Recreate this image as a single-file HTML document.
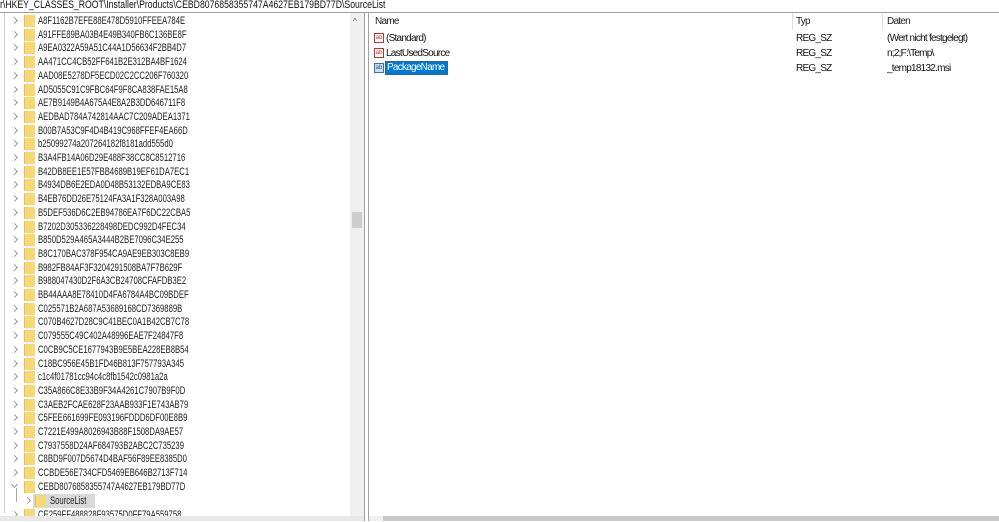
<!DOCTYPE html>
<html><head><meta charset="utf-8"><style>
*{margin:0;padding:0;box-sizing:border-box}
body{width:999px;height:521px;overflow:hidden;background:#fff;font-family:"Liberation Sans",sans-serif;font-size:10px;letter-spacing:-0.75px;color:#111;position:relative}
.abs{position:absolute}
.addr{left:0;top:0;height:12px;line-height:11px;white-space:nowrap;font-size:11px;letter-spacing:0;transform:scaleX(0.79);transform-origin:0 0}
.row{position:absolute;left:0;height:14px;width:350px;white-space:nowrap}
.chev{position:absolute;left:12px;top:4px;width:5px;height:5px;border-right:1px solid #999;border-top:1px solid #999;transform:rotate(45deg)}
.fold{position:absolute;left:24px;top:1px;width:11px;height:12px;background:#f8d775;border-left:1px solid #e8c05a}
.t{position:absolute;left:38px;top:1px;line-height:12px;font-size:11px;letter-spacing:0;transform:scaleX(0.7);transform-origin:0 0;color:#222}
.h{position:absolute;top:16px;line-height:12px;color:#222}
.ic{position:absolute;left:374px;width:10px;height:10px;border:1px solid #b33;background:#fff;font-size:6px;line-height:8px;color:#c33;text-align:center;letter-spacing:0}
.v{position:absolute;line-height:12px}
</style></head><body>
<div class="abs addr">r\HKEY_CLASSES_ROOT\Installer\Products\CEBD8076858355747A4627EB179BD77D\SourceList</div>
<div class="abs" style="left:0;top:12px;width:999px;height:1px;background:#a0a0a0"></div>
<div class="abs" style="left:4px;top:13px;width:1px;height:500px;background:#ccc"></div>
<div id="tree"></div>
<div class="abs" style="left:350px;top:13px;width:14px;height:503px;background:#f0f0f0"></div>
<div class="abs" style="left:352px;top:212px;width:10px;height:16px;background:#cdcdcd"></div>
<div class="abs" style="left:353px;top:17px;font-size:8px;color:#555">^</div>
<div class="abs" style="left:364px;top:13px;width:1px;height:508px;background:#a0a0a0"></div>
<div class="abs" style="left:368px;top:13px;width:1px;height:508px;background:#a0a0a0"></div>
<div class="abs" style="left:0;top:516px;width:364px;height:5px;background:#e8e8e8"></div>
<div class="abs" style="left:369px;top:516px;width:630px;height:5px;background:#f0f0f0"></div>
<div class="abs" style="left:383px;top:516px;width:616px;height:5px;background:#c8c8c8"></div>
<div class="h" style="left:375px">Name</div>
<div class="abs" style="left:792px;top:13px;width:1px;height:17px;background:#e0e0e0"></div>
<div class="h" style="left:796px">Typ</div>
<div class="abs" style="left:882px;top:13px;width:1px;height:17px;background:#e0e0e0"></div>
<div class="h" style="left:887px">Daten</div>
<div class="ic" style="top:33px">ab</div><div class="v" style="left:386px;top:33px">(Standard)</div>
<div class="v" style="left:796px;top:33px">REG_SZ</div><div class="v" style="left:887px;top:33px">(Wert nicht festgelegt)</div>
<div class="ic" style="top:48px">ab</div><div class="v" style="left:386px;top:48px">LastUsedSource</div>
<div class="v" style="left:796px;top:48px">REG_SZ</div><div class="v" style="left:887px;top:48px">n;2;F:\Temp\</div>
<div class="ic" style="top:63px;border-color:#3a6fb0;background:#cde;color:#2a5a9a">ab</div>
<div class="v" style="left:385px;top:61px;height:14px;width:63px;background:#0078d7;border:1px dotted #555;color:#fff;padding-left:1px;line-height:12px">PackageName</div>
<div class="v" style="left:796px;top:63px">REG_SZ</div><div class="v" style="left:887px;top:63px">_temp18132.msi</div>
<script>
var n=["A8F1162B7EFE88E478D5910FFEEA784E","A91FFE89BA03B4E49B340FB6C136BE8F","A9EA0322A59A51C44A1D56634F2BB4D7","AA471CC4CB52FF641B2E312BA4BF1624","AAD08E5278DF5ECD02C2CC206F760320","AD5055C91C9FBC64F9F8CA838FAE15A8","AE7B9149B4A675A4E8A2B3DD646711F8","AEDBAD784A742814AAC7C209ADEA1371","B00B7A53C9F4D4B419C968FFEF4EA66D","b25099274a207264182f8181add555d0","B3A4FB14A06D29E488F38CC8C8512716","B42DB8EE1E57FBB4689B19EF61DA7EC1","B4934DB6E2EDA0D48B53132EDBA9CE83","B4EB76DD26E75124FA3A1F328A003A98","B5DEF536D6C2EB94786EA7F6DC22CBA5","B7202D305336228498DEDC992D4FEC34","B850D529A465A3444B2BE7096C34E255","B8C170BAC378F954CA9AE9EB303C8EB9","B982FB84AF3F3204291508BA7F7B629F","B988047430D2F6A3CB24708CFAFDB3E2","BB44AAA8E78410D4FA6784A4BC09BDEF","C025571B2A687A53689168CD7369889B","C070B4627D28C9C41BEC0A1B42CB7C78","C079555C49C402A48996EAE7F24847F8","C0CB9C5CE1677943B9E5BEA228EB8B54","C18BC956E45B1FD46B813F757793A345","c1c4f01781cc94c4c8fb1542c0981a2a","C35A866C8E33B9F34A4261C7907B9F0D","C3AEB2FCAE628F23AAB933F1E743AB79","C5FEE661699FE093196FDDD6DF00E8B9","C7221E499A8026943B88F1508DA9AE57","C7937558D24AF684793B2ABC2C735239","C8BD9F007D5674D4BAF56F89EE8385D0","CCBDE56E734CFD5469EB646B2713F714","CEBD8076858355747A4627EB179BD77D"];
var h="";
for(var i=0;i<n.length;i++){var y=14+i*13.7;
h+='<div class="row" style="top:'+y+'px">'+(i==34?'<div class="chev" style="transform:rotate(135deg);top:2px"></div>':'<div class="chev"></div>')+'<div class="fold"></div><div class="t">'+n[i]+'</div></div>';}
h+='<div class="row" style="top:494px"><div class="abs" style="left:16px;top:-6px;width:1px;height:14px;background:#aaa"></div><div class="chev" style="left:25px"></div><div class="abs" style="left:33px;top:0;width:62px;height:14px;background:#d9d9d9"></div><div class="fold" style="left:35px"></div><div class="t" style="left:50px">SourceList</div></div>';
h+='<div class="row" style="top:508px"><div class="chev"></div><div class="fold"></div><div class="t">CE259FF488828F93575D0FF79A559758</div></div>';
document.getElementById("tree").innerHTML=h;
</script>
</body></html>
